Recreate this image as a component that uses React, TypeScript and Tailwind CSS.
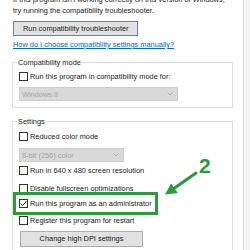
import React from 'react';

const Check = ({ checked = false }: { checked?: boolean }) => (
  <span className="w-[9px] h-[9px] border border-[#333333] bg-white flex items-center justify-center shrink-0">
    {checked && (
      <svg width="7" height="7" viewBox="0 0 7 7">
        <path d="M0.8 3.6 L2.7 5.5 L6.3 1.2" fill="none" stroke="#222" strokeWidth="1" />
      </svg>
    )}
  </span>
);

const Row = ({ label, checked = false, className = '' }: { label: string; checked?: boolean; className?: string }) => (
  <div className={`flex items-center gap-[2px] h-[9px] ${className}`}>
    <Check checked={checked} />
    <span className="whitespace-nowrap">{label}</span>
  </div>
);

const Combo = ({ value, width }: { value: string; width: string }) => (
  <div className={`${width} h-[14px] bg-[#d9d9d9] border border-[#cccccc] text-[#a3a3a3] flex items-center justify-between pl-[2px] pr-[4px]`}>
    <span>{value}</span>
    <svg width="6" height="4" viewBox="0 0 6 4">
      <path d="M0.5 0.5 L3 3 L5.5 0.5" fill="none" stroke="#b0b0b0" strokeWidth="1" />
    </svg>
  </div>
);

export default function App() {
  return (
    <div className="w-[250px] h-[250px] overflow-hidden bg-white flex relative font-['Liberation_Sans',Arial,sans-serif] text-[7.4px] leading-[11px] text-[#1a1a1a]">
      <div className="w-[243px] shrink-0 pl-[12px] pr-[10px]">
        <p className="-mt-[6px] pl-[1px] whitespace-nowrap">
          If this program isn't working correctly on this version of Windows,
          <br />
          try running the compatibility troubleshooter.
        </p>

        <button className="mt-[5px] ml-[1px] w-[125px] h-[15px] bg-[#e1e1e1] border border-[#4f8ac4] text-left pl-[9px] leading-[13px]">
          Run compatibility troubleshooter
        </button>

        <a href="#" className="block mt-[3px] pl-[1px] text-[#0066cc] underline whitespace-nowrap">
          How do I choose compatibility settings manually?
        </a>

        <fieldset className="mt-[7px] border border-[#dcdcdc] px-[6px] pb-[6px]">
          <legend className="px-[1px] -ml-[2px]">Compatibility mode</legend>
          <Row label="Run this program in compatibility mode for:" className="mt-[4px]" />
          <div className="mt-[6px]">
            <Combo value="Windows 8" width="w-[159px]" />
          </div>
        </fieldset>

        <fieldset className="mt-[8px] border border-[#dcdcdc] px-[6px] pb-[20px]">
          <legend className="px-[1px] -ml-[2px]">Settings</legend>
          <Row label="Reduced color mode" className="mt-[5px]" />
          <div className="mt-[7px]">
            <Combo value="8-bit (256) color" width="w-[105px]" />
          </div>
          <Row label="Run in 640 x 480 screen resolution" className="mt-[4px]" />
          <Row label="Disable fullscreen optimizations" className="mt-[9px]" />
          <div className="relative mt-[6px]">
            <Row label="Run this program as an administrator" checked />
            <span className="absolute left-[-6px] top-[-7px] w-[145px] h-[23px] border-[3px] border-[#2a9a3a]" />
          </div>
          <Row label="Register this program for restart" className="mt-[8px]" />
          <button className="mt-[6px] ml-[1px] w-[123px] h-[16px] bg-[#e1e1e1] border border-[#adadad] leading-[14px]">
            Change high DPI settings
          </button>
        </fieldset>
      </div>

      <div className="flex-1 border-l border-[#d9d9d9] bg-[#f4f4f4]" />

      <span className="absolute left-[199px] top-[155px] text-[21px] leading-none font-bold text-[#2a9a3a]">2</span>
      <svg className="absolute left-[160px] top-[150px]" width="60" height="50" viewBox="0 0 60 50">
        <path d="M13.5 38.8 L36 23" stroke="#2a9a3a" strokeWidth="3" strokeLinecap="round" />
        <polygon points="5,44.5 11,33.5 17.8,43" fill="#2a9a3a" />
      </svg>
    </div>
  );
}
